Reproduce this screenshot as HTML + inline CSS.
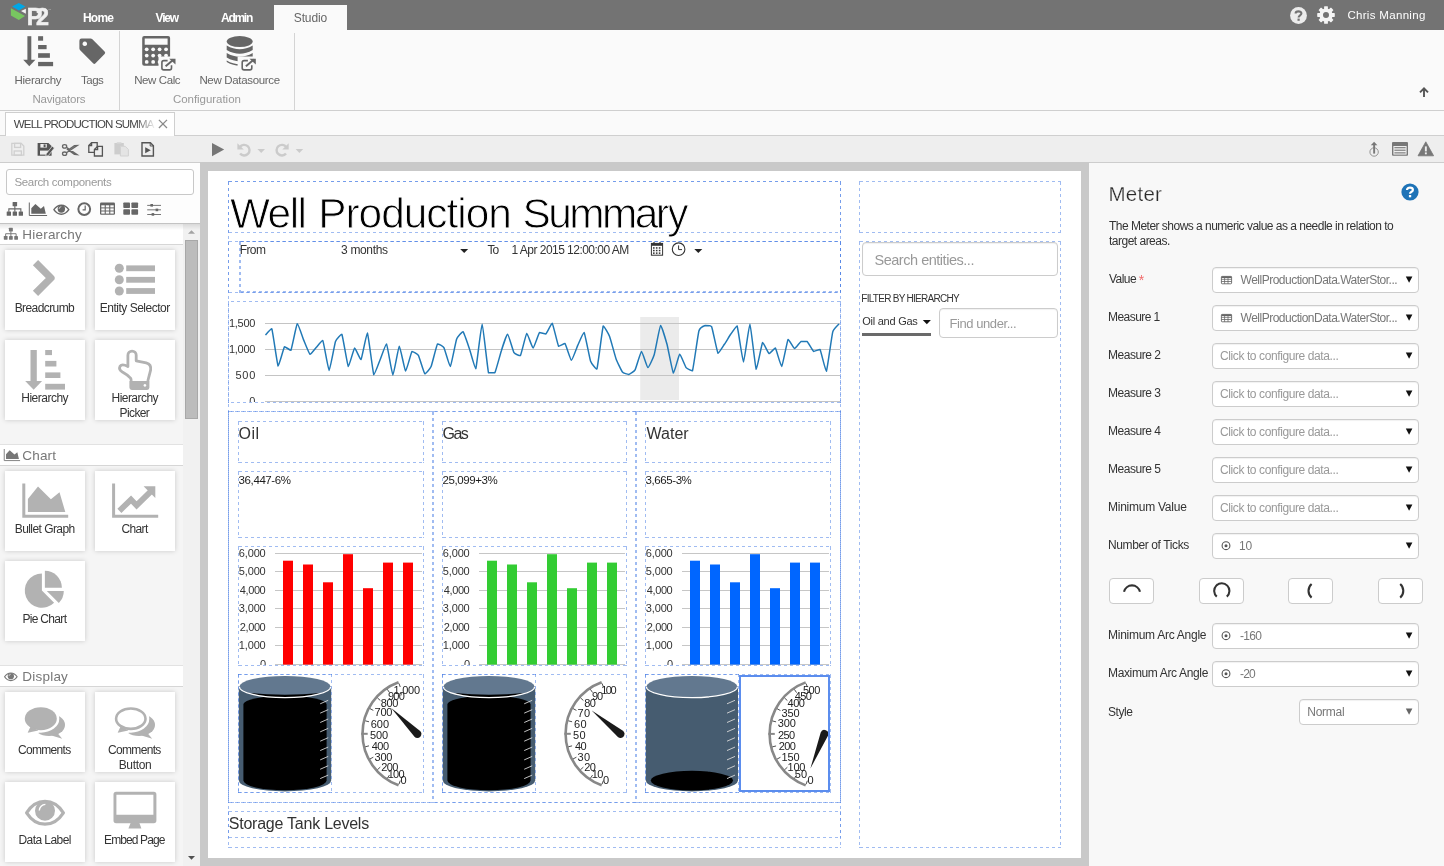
<!DOCTYPE html>
<html><head><meta charset="utf-8"><title>Well Production Summary</title>
<style>
html,body{margin:0;padding:0;}
body{width:1444px;height:866px;overflow:hidden;position:relative;background:#fafafa;font-family:"Liberation Sans",sans-serif;}
.t{position:absolute;white-space:nowrap;line-height:1;}
.b{position:absolute;box-sizing:border-box;}
.d{position:absolute;box-sizing:border-box;background:
repeating-linear-gradient(to right,rgba(82,132,230,0.55) 0,rgba(82,132,230,0.55) 3px,transparent 3px,transparent 6px) 1px 0/calc(100% - 2px) 1px no-repeat,
repeating-linear-gradient(to right,rgba(82,132,230,0.55) 0,rgba(82,132,230,0.55) 3px,transparent 3px,transparent 6px) 1px 100%/calc(100% - 2px) 1px no-repeat,
repeating-linear-gradient(to bottom,rgba(82,132,230,0.55) 0,rgba(82,132,230,0.55) 3px,transparent 3px,transparent 6px) 0 1px/1px calc(100% - 2px) no-repeat,
repeating-linear-gradient(to bottom,rgba(82,132,230,0.55) 0,rgba(82,132,230,0.55) 3px,transparent 3px,transparent 6px) 100% 1px/1px calc(100% - 2px) no-repeat,
linear-gradient(rgba(82,132,230,0.55),rgba(82,132,230,0.55)) 0 0/1px 1px no-repeat,linear-gradient(rgba(82,132,230,0.55),rgba(82,132,230,0.55)) 100% 0/1px 1px no-repeat,linear-gradient(rgba(82,132,230,0.55),rgba(82,132,230,0.55)) 0 100%/1px 1px no-repeat,linear-gradient(rgba(82,132,230,0.55),rgba(82,132,230,0.55)) 100% 100%/1px 1px no-repeat;}
svg{position:absolute;overflow:visible;}
#root{position:absolute;left:0;top:0;width:1444px;height:866px;will-change:transform;}
.card{position:absolute;width:80px;height:80px;background:#fff;box-shadow:0 0 5px rgba(0,0,0,0.18);}
.dd{position:absolute;box-sizing:border-box;background:#fff;border:1px solid #ccc;border-radius:4px;box-shadow:inset 0 1px 1px rgba(0,0,0,0.06);}
</style></head>
<body>
<div id="root">
<div class="b" style="left:0px;top:0px;width:1444px;height:30px;background:#737373;"></div>
<svg style="left:0;top:0" width="60" height="30" viewBox="0 0 60 30">
<polygon points="12.1,6.6 18.8,2.9 25.4,6.4 18.9,10.4" fill="#00a7e6"/>
<polygon points="10.9,8.2 18.3,12.3 25,15.9 18.8,19.9 10.9,15.4" fill="#78c660"/>
<polygon points="25.9,8.7 25.9,13.8 21,11" fill="#f2f2f2"/>
</svg>
<span class="t" style="left:26.80px;top:6.00px;font-size:23.4px;color:#f0f0f0;letter-spacing:-6.500px;font-weight:bold;-webkit-text-stroke:0.5px #f0f0f0;">P2</span>
<span class="t" style="left:48.20px;top:9.00px;font-size:3px;color:#ccc;">™</span>
<span class="t" style="left:82.90px;top:12.00px;font-size:12px;color:#fff;letter-spacing:-0.733px;font-weight:bold;">Home</span>
<span class="t" style="left:155.60px;top:12.00px;font-size:12px;color:#fff;letter-spacing:-1.233px;font-weight:bold;">View</span>
<span class="t" style="left:221.00px;top:12.00px;font-size:12px;color:#fff;letter-spacing:-1.275px;font-weight:bold;">Admin</span>
<div class="b" style="left:274px;top:5px;width:73.2px;height:26px;background:#fafafa;"></div>
<span class="t" style="left:293.80px;top:12.00px;font-size:12px;color:#666;letter-spacing:-0.140px;">Studio</span>
<svg style="left:1289.8px;top:7px" width="17" height="17" viewBox="0 0 17 17"><circle cx="8.5" cy="8.5" r="8.4" fill="#ececec"/>
<path d="M5.6 6.6 C5.6 3.6 11.4 3.6 11.4 6.6 C11.4 8.4 8.6 8.3 8.6 10.4" fill="none" stroke="#737373" stroke-width="2.1"/><rect x="7.5" y="11.6" width="2.2" height="2.2" fill="#737373"/></svg>
<svg style="left:1317px;top:6.2px" width="18" height="18" viewBox="0 0 18 18"><circle cx="9" cy="9" r="4.8" fill="none" stroke="#f4f4f4" stroke-width="3.6"/><rect x="-1.9" y="-8.8" width="3.8" height="5" rx="0.6" transform="translate(9 9) rotate(0)" fill="#f4f4f4"/><rect x="-1.9" y="-8.8" width="3.8" height="5" rx="0.6" transform="translate(9 9) rotate(45)" fill="#f4f4f4"/><rect x="-1.9" y="-8.8" width="3.8" height="5" rx="0.6" transform="translate(9 9) rotate(90)" fill="#f4f4f4"/><rect x="-1.9" y="-8.8" width="3.8" height="5" rx="0.6" transform="translate(9 9) rotate(135)" fill="#f4f4f4"/><rect x="-1.9" y="-8.8" width="3.8" height="5" rx="0.6" transform="translate(9 9) rotate(180)" fill="#f4f4f4"/><rect x="-1.9" y="-8.8" width="3.8" height="5" rx="0.6" transform="translate(9 9) rotate(225)" fill="#f4f4f4"/><rect x="-1.9" y="-8.8" width="3.8" height="5" rx="0.6" transform="translate(9 9) rotate(270)" fill="#f4f4f4"/><rect x="-1.9" y="-8.8" width="3.8" height="5" rx="0.6" transform="translate(9 9) rotate(315)" fill="#f4f4f4"/></svg>
<span class="t" style="left:1347.40px;top:10.00px;font-size:11.5px;color:#fff;letter-spacing:0.317px;">Chris Manning</span>
<div class="b" style="left:0px;top:30px;width:1444px;height:80.5px;background:#fafafa;border-bottom:1px solid #cfcfcf;"></div>
<svg style="left:0;top:30px" width="300" height="80" viewBox="0 30 300 80">
<g fill="#666">
<rect x="27.4" y="36.2" width="3.9" height="24.5"/><polygon points="23.2,59.8 35.4,59.8 29.3,66.3"/>
<rect x="38.1" y="36.2" width="5" height="4.5"/><rect x="38.1" y="45" width="8.5" height="4.2"/><rect x="38.1" y="53.2" width="11.8" height="4.6"/><rect x="38.1" y="61.9" width="15" height="4.3"/>
<path d="M81.6 38.5 L90.5 38.5 Q91.6 38.5 92.4 39.3 L104.6 51.6 Q105.8 52.8 104.6 54 L95.5 63.3 Q94.3 64.5 93.1 63.3 L80.4 50.5 Q79.4 49.5 79.4 48.4 L79.4 40.7 Q79.4 38.5 81.6 38.5 Z M84.8 41.5 a2.3 2.3 0 1 0 0.01 0 Z" fill-rule="evenodd"/>
</g>
<!-- calculator -->
<g fill="#666">
<path fill-rule="evenodd" d="M144.2 36.1 H168.1 Q170.1 36.1 170.1 38.1 V63.8 Q170.1 65.8 168.1 65.8 H144.2 Q142.2 65.8 142.2 63.8 V38.1 Q142.2 36.1 144.2 36.1 Z M144.7 38.6 V44.8 H167.6 V38.6 Z"/>
</g>
<g fill="#fafafa">
<circle cx="146.7" cy="49.3" r="1.9"/><circle cx="153.15" cy="49.3" r="1.9"/><circle cx="159.6" cy="49.3" r="1.9"/><circle cx="166.05" cy="49.3" r="1.9"/><circle cx="146.7" cy="55.6" r="1.9"/><circle cx="153.15" cy="55.6" r="1.9"/><circle cx="159.6" cy="55.6" r="1.9"/><circle cx="166.05" cy="55.6" r="1.9"/><circle cx="146.7" cy="61.9" r="1.9"/><circle cx="153.15" cy="61.9" r="1.9"/><circle cx="159.6" cy="61.9" r="1.9"/><circle cx="166.05" cy="61.9" r="1.9"/>
</g>
<!-- ext link 1 -->
<rect x="158.5" y="56.5" width="18" height="15.5" fill="#fafafa"/>
<g fill="none" stroke="#666" stroke-width="1.6"><path d="M167.6 60.6 H163.8 Q161.9 60.6 161.9 62.5 V68 Q161.9 69.9 163.8 69.9 H169.6 Q171.5 69.9 171.5 68 V65.2"/><path d="M165.6 66.2 L173.6 59.6" stroke-width="2"/></g>
<polygon points="169.2,58.7 175.5,58.7 175.5,64.6" fill="#666"/>
<!-- database -->
<g fill="#666">
<ellipse cx="239.7" cy="41.6" rx="13" ry="5.5"/>
<path d="M226.7 45.4 Q239.7 53 252.7 45.4 V50 Q239.7 57.6 226.7 50 Z"/>
<path d="M226.7 53 Q239.7 60.6 252.7 53 V57.6 Q239.7 65.2 226.7 57.6 Z"/>
<path d="M226.7 60.4 Q239.7 68 252.7 60.4 V62 Q239.7 69.6 226.7 62 Z"/>
</g>
<rect x="237.6" y="56.5" width="19" height="15.5" fill="#fafafa"/>
<g fill="none" stroke="#666" stroke-width="1.6"><path d="M247.9 60.6 H244.1 Q242.2 60.6 242.2 62.5 V68 Q242.2 69.9 244.1 69.9 H249.9 Q251.8 69.9 251.8 68 V65.2"/><path d="M245.9 66.2 L253.9 59.6" stroke-width="2"/></g>
<polygon points="249.5,58.7 255.8,58.7 255.8,64.6" fill="#666"/>
</svg>
<span class="t" style="left:14.50px;top:75.00px;font-size:11.5px;color:#666;letter-spacing:-0.275px;">Hierarchy</span>
<span class="t" style="left:81.00px;top:75.00px;font-size:11.5px;color:#666;letter-spacing:-0.500px;">Tags</span>
<span class="t" style="left:134.20px;top:75.00px;font-size:11.5px;color:#666;letter-spacing:-0.400px;">New Calc</span>
<span class="t" style="left:199.40px;top:75.00px;font-size:11.5px;color:#666;letter-spacing:-0.331px;">New Datasource</span>
<span class="t" style="left:32.50px;top:94.00px;font-size:11.5px;color:#999;letter-spacing:-0.211px;">Navigators</span>
<span class="t" style="left:172.90px;top:94.00px;font-size:11.5px;color:#999;letter-spacing:-0.033px;">Configuration</span>
<div class="b" style="left:119.3px;top:31px;width:1px;height:79px;background:#d4d4d4;"></div>
<div class="b" style="left:294px;top:33px;width:1px;height:77px;background:#d4d4d4;"></div>
<svg style="left:1418px;top:86px" width="12" height="12" viewBox="0 0 12 12"><path d="M6 11 V2.6 M2 6.4 L6 2.3 L10 6.4" fill="none" stroke="#555" stroke-width="1.9"/></svg>
<div class="b" style="left:0px;top:111px;width:1444px;height:25px;background:#fafafa;border-bottom:1px solid #cfcfcf;"></div>
<div class="b" style="left:5px;top:112px;width:170px;height:24px;background:#fff;border:1px solid #cfcfcf;border-bottom:none;"></div>
<span class="t" style="left:13.80px;top:119.00px;font-size:11.5px;color:#444;letter-spacing:-0.840px;">WELL PRODUCTION SUMMA</span>
<div class="b" style="left:136px;top:116px;width:19px;height:16px;background:linear-gradient(to right,rgba(255,255,255,0),rgba(255,255,255,0.95));"></div>
<svg style="left:157px;top:118px" width="12" height="12" viewBox="157 118 12 12"><path d="M158.9 119.9 L167 128 M167 119.9 L158.9 128" stroke="#8a8a8a" stroke-width="1.3" fill="none"/></svg>
<div class="b" style="left:0px;top:136px;width:1444px;height:26px;background:#eeeeee;"></div>
<div class="b" style="left:0px;top:162px;width:1444px;height:1px;background:#cdcdcd;"></div>
<svg style="left:0;top:136px" width="320" height="26" viewBox="0 136 320 26">
<!-- save disabled -->
<g fill="none" stroke="#cfcfcf" stroke-width="1.3"><path d="M11.8 143.4 H21.2 L23.8 146 V155.2 H11.8 Z"/><rect x="14.6" y="143.4" width="6" height="4"/><rect x="14.2" y="151" width="7.2" height="4.2"/></g>
<!-- save edit -->
<g><path d="M37.6 142.9 H48.4 L51.6 146.1 V155.8 H37.6 Z" fill="#555"/><rect x="40.4" y="144" width="6.4" height="3.6" fill="#eee"/><rect x="43.6" y="144.4" width="2" height="2.8" fill="#555"/><rect x="40" y="150.6" width="8.6" height="4" fill="#eee"/>
<path d="M46.2 153.8 L52.2 146.2 L54.4 148 L48.4 155.6 L45.8 156.2 Z" fill="#555" stroke="#eee" stroke-width="0.7"/></g>
<!-- scissors -->
<g fill="none" stroke="#666" stroke-width="1.3"><ellipse cx="64.6" cy="146.4" rx="2.1" ry="1.7"/><ellipse cx="64.6" cy="153.7" rx="2.1" ry="1.7"/><path d="M66.4 147.3 L77.2 154.6 L74.4 154.4 L66.8 149 M66.4 152.8 L77.2 145.5 L74.4 145.7 L69.6 149"/></g>
<!-- copy -->
<g fill="#eee" stroke="#555" stroke-width="1.3"><path d="M91.6 142.7 H97.2 V152.4 H88.8 V145.5 Z"/><path d="M91.6 142.7 V145.5 H88.8" fill="none"/><path d="M97.6 146.3 H102.4 V156 H94.4 V149.5 Z"/><path d="M97.6 146.3 V149.5 H94.4" fill="none"/></g>
<!-- paste disabled -->
<g><rect x="114.4" y="143" width="9.4" height="11.4" fill="#cdcdcd"/><rect x="116.8" y="142.2" width="4.6" height="1.6" fill="#d6d6d6"/><path d="M120.4 146.3 H125.2 L128.4 149.5 V156 H120.4 Z" fill="#e4e4e4" stroke="#d2d2d2" stroke-width="1"/></g>
<!-- preview -->
<g><path d="M142 142.7 H150.4 L153.4 145.7 V156 H142 Z" fill="#eee" stroke="#555" stroke-width="1.4"/><path d="M150.2 142.7 V146 H153.4" fill="none" stroke="#555" stroke-width="1"/><polygon points="145.2,147.2 145.2,153.2 150.8,150.2" fill="#555"/></g>
<!-- play -->
<polygon points="212,143 212,156.2 224.2,149.6" fill="#767676"/>
<!-- undo -->
<g fill="none" stroke="#cbcbcb" stroke-width="2.4"><path d="M239.9 147.1 A5.3 5.3 0 1 1 240.1 153.5"/></g><polygon points="237.4,143.2 237.4,149.6 243.8,149.6" fill="#cbcbcb"/>
<polygon points="257.4,149 265,149 261.2,153" fill="#cbcbcb"/>
<!-- redo -->
<g fill="none" stroke="#cbcbcb" stroke-width="2.4"><path d="M286.2 147.1 A5.3 5.3 0 1 0 286 153.5"/></g><polygon points="288.7,143.2 288.7,149.6 282.3,149.6" fill="#cbcbcb"/>
<polygon points="295.6,149 303.2,149 299.4,153" fill="#cbcbcb"/>
</svg>
<svg style="left:1360px;top:136px" width="84" height="26" viewBox="1360 136 84 26">
<g fill="none" stroke="#8a8a8a" stroke-width="0.9"><circle cx="1374.1" cy="152" r="4.2"/></g>
<rect x="1373.2" y="144.6" width="1.9" height="9" fill="#777"/><polygon points="1370.8,145.2 1377.4,145.2 1374.1,141.8" fill="#777"/>
<rect x="1392" y="142" width="16" height="13.8" rx="1" fill="#777"/><rect x="1393.4" y="146" width="13.2" height="8.6" fill="#eee"/>
<g fill="#888"><rect x="1394.4" y="147" width="11.2" height="1.3"/><rect x="1394.4" y="149.6" width="11.2" height="1.3"/><rect x="1394.4" y="152.2" width="11.2" height="1.3"/></g>
<polygon points="1425.8,141.8 1433.6,155.8 1418,155.8" fill="#777" stroke="#777" stroke-width="0.8" stroke-linejoin="round"/>
<rect x="1424.9" y="146.4" width="1.9" height="5" fill="#eee"/><rect x="1424.9" y="152.4" width="1.9" height="1.9" fill="#eee"/>
</svg>
<div class="b" style="left:0px;top:163px;width:200px;height:703px;background:#f5f5f5;"></div>
<div class="b" style="left:0px;top:163px;width:200px;height:60px;background:#fdfdfd;"></div>
<div class="b" style="left:6px;top:169px;width:188px;height:26px;background:#fff;border:1px solid #c8c8c8;border-radius:3px;"></div>
<span class="t" style="left:14.40px;top:177.00px;font-size:11.5px;color:#9a9a9a;letter-spacing:-0.312px;">Search components</span>
<svg style="left:0;top:196px" width="180" height="26" viewBox="0 196 180 26">
<g transform="translate(6.7 202.1) scale(1)" fill="#666"><rect x="5.9" y="0" width="4.5" height="4.2" rx="0.5"/><rect x="0" y="9.4" width="4.3" height="4.3" rx="0.5"/><rect x="6" y="9.4" width="4.3" height="4.3" rx="0.5"/><rect x="12" y="9.4" width="4.3" height="4.3" rx="0.5"/><path d="M8.15 4 V9.6 M2.15 9.6 V6.8 H14.15 V9.6" fill="none" stroke="#666" stroke-width="1.1"/></g>
<g transform="translate(28.8 202.5) scale(1)" fill="#666"><path d="M0.5 0 V13 H18.3" fill="none" stroke="#666" stroke-width="1"/><polygon points="2.5,11.2 2.5,5.8 6.6,1.4 12,6.2 15.2,3.6 17,11.2"/></g>
<g transform="translate(53.2 204.5) scale(1)"><path d="M0.7 5.2 C2.6 2.3 5.2 0.7 8.15 0.7 C11.1 0.7 13.7 2.3 15.6 5.2 C13.7 8.1 11.1 9.7 8.15 9.7 C5.2 9.7 2.6 8.1 0.7 5.2 Z" fill="none" stroke="#666" stroke-width="1.4" stroke-linejoin="round"/><circle cx="8.15" cy="4.5" r="3.7" fill="#666"/><path d="M5.9 4.4 A2.3 2.3 0 0 1 8.1 2.2" stroke="#fdfdfd" stroke-width="0.7" fill="none"/></g>
<circle cx="84.25" cy="209.1" r="5.9" fill="none" stroke="#666" stroke-width="2"/><path d="M85.2 205.6 V209.9 H82.6" fill="none" stroke="#666" stroke-width="1.2"/>
<rect x="100" y="202.5" width="15" height="12.3" rx="1.2" fill="#666"/><g fill="#fdfdfd"><rect x="101.3" y="205.3" width="3.4" height="2.1"/><rect x="105.8" y="205.3" width="3.4" height="2.1"/><rect x="110.3" y="205.3" width="3.4" height="2.1"/><rect x="101.3" y="208.4" width="3.4" height="2.1"/><rect x="105.8" y="208.4" width="3.4" height="2.1"/><rect x="110.3" y="208.4" width="3.4" height="2.1"/><rect x="101.3" y="211.5" width="3.4" height="2.1"/><rect x="105.8" y="211.5" width="3.4" height="2.1"/><rect x="110.3" y="211.5" width="3.4" height="2.1"/></g>
<g fill="#666"><rect x="123.3" y="202.5" width="6.7" height="5.6" rx="0.8"/><rect x="131.4" y="202.5" width="6.7" height="5.6" rx="0.8"/><rect x="123.3" y="209.2" width="6.7" height="5.6" rx="0.8"/><rect x="131.4" y="209.2" width="6.7" height="5.6" rx="0.8"/></g>
<g fill="#666"><rect x="147.2" y="204.9" width="13.8" height="0.9"/><rect x="147.2" y="209.4" width="13.8" height="0.9"/><rect x="147.2" y="214" width="13.8" height="0.9"/><rect x="150.4" y="204" width="2.6" height="2.6"/><rect x="155.6" y="208.6" width="2.6" height="2.6"/><rect x="151.6" y="213.1" width="2.6" height="2.6"/></g>
</svg>
<div class="b" style="left:183px;top:224px;width:17px;height:642px;background:#f1f1f1;"></div>
<div class="b" style="left:185.4px;top:240.3px;width:12.4px;height:179.2px;background:#bcbcbc;border:1px solid #a8a8a8;"></div>
<svg style="left:183px;top:224px" width="17" height="642" viewBox="0 0 17 642"><polygon points="5,9.8 12,9.8 8.5,6.2" fill="#a3a3a3"/><polygon points="5,632 12,632 8.5,635.8" fill="#505050"/></svg>
<div class="b" style="left:0px;top:223px;width:183px;height:22px;background:#fff;border-bottom:1px solid #d6d6d6;border-top:1px solid #e2e2e2;"></div>
<span class="t" style="left:22.30px;top:228.00px;font-size:13.5px;color:#777;letter-spacing:0.213px;">Hierarchy</span>
<div class="b" style="left:0px;top:444px;width:183px;height:22px;background:#fff;border-bottom:1px solid #d6d6d6;border-top:1px solid #e2e2e2;"></div>
<span class="t" style="left:22.30px;top:449.00px;font-size:13.5px;color:#777;letter-spacing:0.175px;">Chart</span>
<div class="b" style="left:0px;top:665px;width:183px;height:22px;background:#fff;border-bottom:1px solid #d6d6d6;border-top:1px solid #e2e2e2;"></div>
<span class="t" style="left:22.30px;top:670.00px;font-size:13.5px;color:#777;letter-spacing:0.217px;">Display</span>
<div class="b" style="left:0px;top:223px;width:200px;height:1px;background:#c3c3c3;"></div>
<div class="b" style="left:0px;top:224px;width:200px;height:6px;background:linear-gradient(to bottom,rgba(0,0,0,0.10),rgba(0,0,0,0));"></div>
<svg style="left:0;top:224px" width="30" height="470" viewBox="0 224 30 470">
<g transform="translate(3.8 227.8) scale(0.87)" fill="#777"><rect x="5.9" y="0" width="4.5" height="4.2" rx="0.5"/><rect x="0" y="9.4" width="4.3" height="4.3" rx="0.5"/><rect x="6" y="9.4" width="4.3" height="4.3" rx="0.5"/><rect x="12" y="9.4" width="4.3" height="4.3" rx="0.5"/><path d="M8.15 4 V9.6 M2.15 9.6 V6.8 H14.15 V9.6" fill="none" stroke="#777" stroke-width="1.1"/></g>
<g transform="translate(3.8 449) scale(0.89)" fill="#777"><path d="M0.5 0 V13 H18.3" fill="none" stroke="#777" stroke-width="1"/><polygon points="2.5,11.2 2.5,5.8 6.6,1.4 12,6.2 15.2,3.6 17,11.2"/></g>
<g transform="translate(4 672.4) scale(0.84)"><path d="M0.7 5.2 C2.6 2.3 5.2 0.7 8.15 0.7 C11.1 0.7 13.7 2.3 15.6 5.2 C13.7 8.1 11.1 9.7 8.15 9.7 C5.2 9.7 2.6 8.1 0.7 5.2 Z" fill="none" stroke="#777" stroke-width="1.4" stroke-linejoin="round"/><circle cx="8.15" cy="4.5" r="3.7" fill="#777"/><path d="M5.9 4.4 A2.3 2.3 0 0 1 8.1 2.2" stroke="#fdfdfd" stroke-width="0.7" fill="none"/></g>
</svg>
<div class="card" style="left:5px;top:250px"></div>
<div class="card" style="left:95px;top:250px"></div>
<div class="card" style="left:5px;top:340px"></div>
<div class="card" style="left:95px;top:340px"></div>
<div class="card" style="left:5px;top:471px"></div>
<div class="card" style="left:95px;top:471px"></div>
<div class="card" style="left:5px;top:561px"></div>
<div class="card" style="left:5px;top:692px"></div>
<div class="card" style="left:95px;top:692px"></div>
<div class="card" style="left:5px;top:782px"></div>
<div class="card" style="left:95px;top:782px"></div>
<span class="t" style="left:14.70px;top:302.00px;font-size:12px;color:#333;letter-spacing:-0.589px;">Breadcrumb</span>
<span class="t" style="left:99.80px;top:302.00px;font-size:12px;color:#333;letter-spacing:-0.500px;">Entity Selector</span>
<span class="t" style="left:21.30px;top:392.00px;font-size:12px;color:#333;letter-spacing:-0.512px;">Hierarchy</span>
<span class="t" style="left:111.50px;top:392.00px;font-size:12px;color:#333;letter-spacing:-0.538px;">Hierarchy</span>
<span class="t" style="left:119.60px;top:407.00px;font-size:12px;color:#333;letter-spacing:-0.620px;">Picker</span>
<span class="t" style="left:14.70px;top:523.00px;font-size:12px;color:#333;letter-spacing:-0.555px;">Bullet Graph</span>
<span class="t" style="left:121.40px;top:523.00px;font-size:12px;color:#333;letter-spacing:-0.600px;">Chart</span>
<span class="t" style="left:22.40px;top:613.00px;font-size:12px;color:#333;letter-spacing:-0.675px;">Pie Chart</span>
<span class="t" style="left:17.90px;top:744.00px;font-size:12px;color:#333;letter-spacing:-0.671px;">Comments</span>
<span class="t" style="left:108.10px;top:744.00px;font-size:12px;color:#333;letter-spacing:-0.686px;">Comments</span>
<span class="t" style="left:118.70px;top:759.00px;font-size:12px;color:#333;letter-spacing:-0.340px;">Button</span>
<span class="t" style="left:18.40px;top:834.00px;font-size:12px;color:#333;letter-spacing:-0.544px;">Data Label</span>
<span class="t" style="left:104.00px;top:834.00px;font-size:12px;color:#333;letter-spacing:-0.878px;">Embed Page</span>
<svg style="left:0;top:245px" width="183" height="621" viewBox="0 245 183 621">
<g fill="#b2b2b2" stroke="none">
<path d="M35.5 262.7 L50.9 278 L35.5 293.3" fill="none" stroke="#b2b2b2" stroke-width="7.4" stroke-linejoin="round"/>
<circle cx="119.3" cy="268.3" r="4.5"/><rect x="126.2" y="265.4" width="28.8" height="5.8"/>
<circle cx="119.3" cy="279.8" r="4.5"/><rect x="126.2" y="276.9" width="28.8" height="5.8"/>
<circle cx="119.3" cy="291" r="4.5"/><rect x="126.2" y="288.1" width="28.8" height="5.8"/>
<rect x="30.5" y="350" width="6.3" height="32"/><polygon points="25.2,381 42.1,381 33.65,389.8"/>
<rect x="45.2" y="350" width="6.8" height="5.1"/>
<rect x="45.2" y="360.9" width="11.2" height="5.6"/>
<rect x="45.2" y="372.4" width="15.2" height="5.6"/>
<rect x="45.2" y="383.8" width="19.8" height="5.8"/>
<path d="M131.3 381 L130.8 378.4 Q127 374.4 122.4 372 Q118.4 369.6 120 366.4 Q122 363.4 127.9 366.6 V355.2 A4.1 4.1 0 0 1 136.2 355.2 V360.8 L146.2 362.8 Q151.6 364.2 150.6 370.2 L147.8 381" fill="none" stroke="#b2b2b2" stroke-width="2.8" stroke-linejoin="round"/>
<path d="M129.4 381 H149.4 V387.6 Q149.4 389.9 147.1 389.9 H131.7 Q129.4 389.9 129.4 387.6 Z M144.9 384 a1.4 1.4 0 1 0 0.01 0 Z" fill-rule="evenodd"/>
<path d="M23.8 483.4 V516.3 H68.2" fill="none" stroke="#b2b2b2" stroke-width="3"/>
<polygon points="27.9,512 27.9,499 38,486.6 50.9,499.2 59.5,492.2 65.3,512"/>
<path d="M113.6 483.4 V516.3 H158.2" fill="none" stroke="#b2b2b2" stroke-width="3"/>
<path d="M119.4 510.8 L131 499.6 L136.6 505.4 L150.6 491.6" fill="none" stroke="#b2b2b2" stroke-width="5.8"/>
<polygon points="143.6,486.2 155.3,486.2 155.3,498"/>
<path d="M41.9 573.4 A17.2 17.2 0 1 0 54.1 602.8 L41.9 590.6 Z"/>
<path d="M44.9 570.8 A17 17 0 0 1 61.9 587.8 H44.9 Z"/>
<path d="M46.8 591 H63.8 A17 17 0 0 1 58.8 603 Z"/>
<ellipse cx="49" cy="724.9" rx="16" ry="11.2"/><polygon points="57.6,733.2 62.2,738.7 51.5,735.6"/><ellipse cx="40.8" cy="718.7" rx="18.5" ry="14" fill="#fff"/><polygon points="27.5,726 25.4,735.2 40,733" fill="#fff"/><ellipse cx="40.8" cy="718.7" rx="16" ry="11.5"/><polygon points="30.6,726.6 27.6,732.8 38.4,730.6"/>
<ellipse cx="139" cy="724.9" rx="16" ry="11.2"/><polygon points="147.6,733.2 152.2,738.7 141.5,735.6"/><ellipse cx="130.8" cy="718.7" rx="18.5" ry="14" fill="#fff"/><polygon points="117.5,726 115.4,735.2 130,733" fill="#fff"/><polygon points="120.6,726.6 117.6,732.8 128.4,730.6"/><ellipse cx="130.8" cy="718.7" rx="14.7" ry="10.2" fill="#fff" stroke="#b2b2b2" stroke-width="2.6"/>
<path d="M26.6 812.8 C31 806 38 801.4 45 801.4 C52 801.4 59 806 63.4 812.8 C59 819.6 52 824.2 45 824.2 C38 824.2 31 819.6 26.6 812.8 Z" fill="none" stroke="#b2b2b2" stroke-width="3.2" stroke-linejoin="round"/><circle cx="45" cy="810.7" r="10"/><path d="M39.3 810.4 A6.2 6.2 0 0 1 45.4 804.4" stroke="#fff" stroke-width="1.4" fill="none"/>
<path fill-rule="evenodd" d="M116.1 791.8 H153.8 Q156.4 791.8 156.4 794.4 V820.6 Q156.4 823.2 153.8 823.2 H116.1 Q113.5 823.2 113.5 820.6 V794.4 Q113.5 791.8 116.1 791.8 Z M116.4 794.8 V814.8 H153.4 V794.8 Z"/><polygon points="130.6,823 139.4,823 141.4,828.6 128.4,828.6"/>
</g></svg>
<div class="b" style="left:200px;top:162px;width:890px;height:704px;background:#c9c9c9;"></div>
<div class="b" style="left:208px;top:171px;width:873px;height:687px;background:#fff;"></div>
<div class="d" style="left:228px;top:181px;width:613px;height:52px;"></div>
<span class="t" style="left:229.90px;top:193.00px;font-size:42.4px;color:#000;letter-spacing:-1.533px;-webkit-text-stroke:0.9px #fff;">Well</span>
<span class="t" style="left:318.20px;top:193.00px;font-size:42.4px;color:#000;letter-spacing:-0.989px;-webkit-text-stroke:0.9px #fff;">Production</span>
<span class="t" style="left:522.60px;top:193.00px;font-size:42.4px;color:#000;letter-spacing:-2.583px;-webkit-text-stroke:0.9px #fff;">Summary</span>
<div class="d" style="left:228px;top:241px;width:613px;height:52px;"></div>
<div class="d" style="left:239px;top:241px;width:602px;height:52px;"></div>
<div class="d" style="left:240px;top:241px;width:601px;height:51px;"></div>
<span class="t" style="left:239.70px;top:244.00px;font-size:12px;color:#333;letter-spacing:-0.600px;">From</span>
<span class="t" style="left:341.10px;top:244.00px;font-size:12px;color:#333;letter-spacing:-0.357px;">3 months</span>
<span class="t" style="left:487.50px;top:244.00px;font-size:12px;color:#333;letter-spacing:-0.900px;">To</span>
<span class="t" style="left:511.60px;top:244.00px;font-size:12px;color:#333;letter-spacing:-0.533px;">1 Apr 2015 12:00:00 AM</span>
<svg style="left:440px;top:240px" width="280" height="20" viewBox="440 240 280 20">
<polygon points="460.2,249 468.2,249 464.2,253" fill="#222"/>
<rect x="651.4" y="243.4" width="11.2" height="11.8" fill="none" stroke="#333" stroke-width="1"/><rect x="651.4" y="243.4" width="11.2" height="2.4" fill="#333"/>
<g fill="#333"><rect x="653" y="247.2" width="1.6" height="1.5"/><rect x="655.9" y="247.2" width="1.6" height="1.5"/><rect x="658.8" y="247.2" width="1.6" height="1.5"/><rect x="653" y="249.8" width="1.6" height="1.5"/><rect x="655.9" y="249.8" width="1.6" height="1.5"/><rect x="658.8" y="249.8" width="1.6" height="1.5"/><rect x="653" y="252.4" width="1.6" height="1.5"/><rect x="655.9" y="252.4" width="1.6" height="1.5"/><rect x="658.8" y="252.4" width="1.6" height="1.5"/></g>
<rect x="653.4" y="242" width="1.2" height="2.4" fill="#333"/><rect x="659.4" y="242" width="1.2" height="2.4" fill="#333"/>
<circle cx="678.6" cy="249.2" r="6.3" fill="none" stroke="#333" stroke-width="1.1"/><path d="M678.6 245.4 V249.6 H682" fill="none" stroke="#333" stroke-width="1"/>
<polygon points="694.3,249 702.3,249 698.3,253" fill="#222"/>
</svg>
<div class="d" style="left:228px;top:301px;width:613px;height:102px;background-position:3px 0,3px 100%,0 3px,100% 3px,0 0,100% 0,0 100%,100% 100%;"></div>
<div class="b" style="left:229px;top:302px;width:611px;height:100px;overflow:hidden;">
<svg style="left:0;top:0" width="611" height="110" viewBox="229 302 611 110">
<rect x="640.2" y="317" width="38.8" height="83" fill="#ebebeb"/>
<rect x="265" y="323" width="575" height="1" fill="#c4c4c4"/>
<rect x="265" y="349" width="575" height="1" fill="#c4c4c4"/>
<rect x="265" y="375" width="575" height="1" fill="#c4c4c4"/>
<rect x="265" y="401" width="575" height="1" fill="#c4c4c4"/>
<path d="M265.4 335.0 C265.8 334.6 270.9 328.8 271.8 328.8 C272.7 331.0 277.3 364.7 278.1 366.0 C279.0 366.0 283.6 347.8 284.5 346.7 C285.4 346.7 290.0 350.3 290.9 350.3 C291.8 348.7 296.4 324.4 297.3 323.7 C298.2 323.7 302.8 337.8 303.6 339.9 C304.5 342.0 309.1 353.8 310.0 354.3 C310.9 354.3 315.5 348.2 316.4 347.2 C317.3 346.2 321.9 340.5 322.8 340.5 C323.7 342.1 328.3 370.3 329.1 370.4 C330.0 370.4 334.6 343.9 335.5 341.4 C336.4 338.9 341.0 334.3 341.9 334.3 C342.8 336.1 347.4 365.5 348.3 366.5 C349.2 366.5 353.7 348.6 354.6 348.1 C355.5 348.1 360.1 359.6 361.0 359.6 C361.9 358.5 366.5 333.0 367.4 333.0 C368.3 334.1 372.9 372.8 373.8 374.7 C374.7 374.7 379.2 362.0 380.1 359.8 C381.0 357.6 385.6 343.9 386.5 343.9 C387.4 345.0 392.0 374.7 392.9 374.9 C393.8 374.9 398.4 346.6 399.3 346.3 C400.2 346.3 404.7 370.7 405.6 371.1 C406.5 371.1 411.1 352.5 412.0 351.4 C412.9 351.4 417.5 353.8 418.4 355.4 C419.3 357.0 423.9 373.0 424.8 373.8 C425.7 373.8 430.2 368.6 431.1 366.5 C432.0 364.4 436.6 345.2 437.5 343.9 C438.4 343.9 443.0 346.0 443.9 347.6 C444.8 349.2 449.4 366.5 450.3 366.5 C451.2 365.9 455.7 341.6 456.6 339.2 C457.5 336.8 462.1 331.7 463.0 331.7 C463.9 332.4 468.5 346.1 469.4 348.7 C470.3 351.3 474.9 368.7 475.8 368.7 C476.6 367.0 481.2 324.3 482.1 324.3 C483.0 324.6 487.6 369.3 488.5 372.7 C489.4 372.7 494.0 372.7 494.9 372.7 C495.8 371.2 500.4 353.7 501.3 351.0 C502.1 348.3 506.7 334.3 507.6 334.3 C508.5 334.4 513.1 351.2 514.0 352.7 C514.9 354.2 519.5 355.6 520.4 355.6 C521.3 354.2 525.9 333.9 526.8 333.4 C527.6 333.4 532.2 348.0 533.1 348.0 C534.0 347.9 538.6 333.5 539.5 332.5 C540.4 332.5 545.0 333.9 545.9 333.9 C546.8 333.2 551.4 323.2 552.2 323.2 C553.1 324.1 557.7 344.9 558.6 346.3 C559.5 346.3 564.1 343.6 565.0 343.6 C565.9 344.6 570.5 360.1 571.4 360.2 C572.3 360.2 576.9 347.3 577.7 345.4 C578.6 343.5 583.2 332.5 584.1 332.5 C585.0 333.6 589.6 358.3 590.5 360.9 C591.4 363.5 596.0 369.1 596.9 369.1 C597.8 366.7 602.4 328.4 603.2 326.1 C604.1 326.1 608.7 334.2 609.6 336.5 C610.5 338.8 615.1 356.2 616.0 358.7 C616.9 361.2 621.5 370.9 622.4 372.0 C623.3 373.1 627.9 374.4 628.7 374.4 C629.6 374.2 634.2 371.4 635.1 369.8 C636.0 368.2 640.6 351.6 641.5 351.4 C642.4 351.4 647.0 367.4 647.9 367.6 C648.8 367.6 653.3 357.6 654.2 354.7 C655.1 351.8 659.7 326.2 660.6 325.5 C661.5 325.5 666.1 341.0 667.0 344.3 C667.9 347.6 672.5 372.4 673.4 373.1 C674.3 373.1 678.8 354.7 679.7 354.3 C680.6 354.3 685.2 366.5 686.1 367.6 C687.0 368.7 691.6 370.7 692.5 370.7 C693.4 368.1 698.0 334.2 698.9 331.0 C699.8 327.8 704.3 325.8 705.2 325.5 C706.1 325.5 710.7 325.5 711.6 326.6 C712.5 328.5 717.1 352.0 718.0 353.2 C718.9 353.2 723.5 345.6 724.4 344.3 C725.3 343.0 729.8 335.6 730.7 334.3 C731.6 333.0 736.2 325.9 737.1 325.9 C738.0 327.8 742.6 362.0 743.5 362.0 C744.4 361.9 749.0 324.3 749.9 324.3 C750.8 324.8 755.3 368.0 756.2 369.3 C757.1 369.3 761.7 343.6 762.6 342.5 C763.5 342.5 768.1 353.2 769.0 353.6 C769.9 353.6 774.5 348.1 775.4 348.1 C776.2 349.0 780.8 366.5 781.7 366.5 C782.6 365.9 787.2 340.7 788.1 339.4 C789.0 339.4 793.6 348.3 794.5 348.5 C795.4 348.5 800.0 342.1 800.9 341.6 C801.7 341.6 806.3 341.6 807.2 341.6 C808.1 342.3 812.7 350.9 813.6 351.4 C814.5 351.4 819.1 349.4 820.0 349.4 C820.9 350.8 825.5 371.3 826.4 371.3 C827.2 370.1 831.8 335.4 832.7 332.1 C833.6 328.8 838.7 324.5 839.1 323.9" fill="none" stroke="#2179b6" stroke-width="1.5" stroke-linejoin="round"/>
</svg>
<span class="t" style="left:0.00px;top:16.00px;font-size:11px;color:#333;letter-spacing:-0.275px;">1,500</span>
<span class="t" style="left:0.00px;top:42.00px;font-size:11px;color:#333;letter-spacing:-0.275px;">1,000</span>
<span class="t" style="left:6.60px;top:68.00px;font-size:11px;color:#333;letter-spacing:0.650px;">500</span>
<span class="t" style="left:20.20px;top:94.00px;font-size:11px;color:#333;">0</span>
</div>
<div class="d" style="left:228px;top:411px;width:613px;height:392px;background-position:3px 0,3px 100%,0 3px,100% 3px,0 0,100% 0,0 100%,100% 100%;"></div>
<div class="d" style="left:228px;top:411px;width:205px;height:392px;"></div>
<div class="d" style="left:238px;top:421px;width:186px;height:42px;"></div>
<span class="t" style="left:238.60px;top:426.00px;font-size:16px;color:#333;letter-spacing:0.500px;">Oil</span>
<div class="d" style="left:238px;top:471px;width:186px;height:67px;"></div>
<span class="t" style="left:238.60px;top:475.00px;font-size:11.5px;color:#1c1c1c;letter-spacing:-0.400px;">36,447-6%</span>
<div class="d" style="left:238px;top:546px;width:186px;height:120px;"></div>
<div class="b" style="left:239px;top:547px;width:184px;height:118px;overflow:hidden;">
<svg style="left:0;top:0" width="184" height="125" viewBox="239 547 184 125">
<rect x="275" y="664" width="147" height="1" fill="#c6c6c6"/>
<rect x="275" y="645" width="147" height="1" fill="#c6c6c6"/>
<rect x="275" y="627" width="147" height="1" fill="#c6c6c6"/>
<rect x="275" y="608" width="147" height="1" fill="#c6c6c6"/>
<rect x="275" y="590" width="147" height="1" fill="#c6c6c6"/>
<rect x="275" y="571" width="147" height="1" fill="#c6c6c6"/>
<rect x="275" y="553" width="147" height="1" fill="#c6c6c6"/>
<rect x="283" y="560.7" width="10" height="103.9" fill="#ff0000"/>
<rect x="303" y="564.5" width="10" height="100.1" fill="#ff0000"/>
<rect x="323" y="582.3" width="10" height="82.3" fill="#ff0000"/>
<rect x="343" y="554.2" width="10" height="110.4" fill="#ff0000"/>
<rect x="363" y="588.2" width="10" height="76.4" fill="#ff0000"/>
<rect x="383" y="562.6" width="10" height="102.0" fill="#ff0000"/>
<rect x="403" y="562.6" width="10" height="102.0" fill="#ff0000"/>
</svg>
<span class="t" style="left:20.90px;top:112.00px;font-size:11px;color:#333;">0</span>
<span class="t" style="left:-0.20px;top:93.00px;font-size:11px;color:#333;letter-spacing:-0.150px;">1,000</span>
<span class="t" style="left:0.80px;top:75.00px;font-size:11px;color:#333;letter-spacing:-0.400px;">2,000</span>
<span class="t" style="left:-0.20px;top:56.00px;font-size:11px;color:#333;letter-spacing:-0.150px;">3,000</span>
<span class="t" style="left:0.80px;top:38.00px;font-size:11px;color:#333;letter-spacing:-0.400px;">4,000</span>
<span class="t" style="left:-0.20px;top:19.00px;font-size:11px;color:#333;letter-spacing:-0.150px;">5,000</span>
<span class="t" style="left:-0.20px;top:1.00px;font-size:11px;color:#333;letter-spacing:-0.150px;">6,000</span>
</div>
<div class="d" style="left:238px;top:674px;width:186px;height:119px;"></div>
<div class="d" style="left:433px;top:411px;width:203px;height:392px;"></div>
<div class="d" style="left:442px;top:421px;width:185px;height:42px;"></div>
<span class="t" style="left:442.60px;top:426.00px;font-size:16px;color:#333;letter-spacing:-1.600px;">Gas</span>
<div class="d" style="left:442px;top:471px;width:185px;height:67px;"></div>
<span class="t" style="left:442.60px;top:475.00px;font-size:11.5px;color:#1c1c1c;letter-spacing:-0.425px;">25,099+3%</span>
<div class="d" style="left:442px;top:546px;width:185px;height:120px;"></div>
<div class="b" style="left:443px;top:547px;width:183px;height:118px;overflow:hidden;">
<svg style="left:0;top:0" width="183" height="125" viewBox="443 547 183 125">
<rect x="479" y="664" width="146" height="1" fill="#c6c6c6"/>
<rect x="479" y="645" width="146" height="1" fill="#c6c6c6"/>
<rect x="479" y="627" width="146" height="1" fill="#c6c6c6"/>
<rect x="479" y="608" width="146" height="1" fill="#c6c6c6"/>
<rect x="479" y="590" width="146" height="1" fill="#c6c6c6"/>
<rect x="479" y="571" width="146" height="1" fill="#c6c6c6"/>
<rect x="479" y="553" width="146" height="1" fill="#c6c6c6"/>
<rect x="487" y="560.7" width="10" height="103.9" fill="#33cc33"/>
<rect x="507" y="564.5" width="10" height="100.1" fill="#33cc33"/>
<rect x="527" y="582.3" width="10" height="82.3" fill="#33cc33"/>
<rect x="547" y="554.2" width="10" height="110.4" fill="#33cc33"/>
<rect x="567" y="588.2" width="10" height="76.4" fill="#33cc33"/>
<rect x="587" y="562.6" width="10" height="102.0" fill="#33cc33"/>
<rect x="607" y="562.6" width="10" height="102.0" fill="#33cc33"/>
</svg>
<span class="t" style="left:20.90px;top:112.00px;font-size:11px;color:#333;">0</span>
<span class="t" style="left:-0.20px;top:93.00px;font-size:11px;color:#333;letter-spacing:-0.150px;">1,000</span>
<span class="t" style="left:0.80px;top:75.00px;font-size:11px;color:#333;letter-spacing:-0.400px;">2,000</span>
<span class="t" style="left:-0.20px;top:56.00px;font-size:11px;color:#333;letter-spacing:-0.150px;">3,000</span>
<span class="t" style="left:0.80px;top:38.00px;font-size:11px;color:#333;letter-spacing:-0.400px;">4,000</span>
<span class="t" style="left:-0.20px;top:19.00px;font-size:11px;color:#333;letter-spacing:-0.150px;">5,000</span>
<span class="t" style="left:-0.20px;top:1.00px;font-size:11px;color:#333;letter-spacing:-0.150px;">6,000</span>
</div>
<div class="d" style="left:442px;top:674px;width:185px;height:119px;"></div>
<div class="d" style="left:636px;top:411px;width:205px;height:392px;"></div>
<div class="d" style="left:645px;top:421px;width:186px;height:42px;"></div>
<span class="t" style="left:646.60px;top:426.00px;font-size:16px;color:#333;letter-spacing:0.000px;">Water</span>
<div class="d" style="left:645px;top:471px;width:186px;height:67px;"></div>
<span class="t" style="left:645.60px;top:475.00px;font-size:11.5px;color:#1c1c1c;letter-spacing:-0.429px;">3,665-3%</span>
<div class="d" style="left:645px;top:546px;width:186px;height:120px;"></div>
<div class="b" style="left:646px;top:547px;width:184px;height:118px;overflow:hidden;">
<svg style="left:0;top:0" width="184" height="125" viewBox="646 547 184 125">
<rect x="682" y="664" width="147" height="1" fill="#c6c6c6"/>
<rect x="682" y="645" width="147" height="1" fill="#c6c6c6"/>
<rect x="682" y="627" width="147" height="1" fill="#c6c6c6"/>
<rect x="682" y="608" width="147" height="1" fill="#c6c6c6"/>
<rect x="682" y="590" width="147" height="1" fill="#c6c6c6"/>
<rect x="682" y="571" width="147" height="1" fill="#c6c6c6"/>
<rect x="682" y="553" width="147" height="1" fill="#c6c6c6"/>
<rect x="690" y="560.7" width="10" height="103.9" fill="#0066ff"/>
<rect x="710" y="564.5" width="10" height="100.1" fill="#0066ff"/>
<rect x="730" y="582.3" width="10" height="82.3" fill="#0066ff"/>
<rect x="750" y="554.2" width="10" height="110.4" fill="#0066ff"/>
<rect x="770" y="588.2" width="10" height="76.4" fill="#0066ff"/>
<rect x="790" y="562.6" width="10" height="102.0" fill="#0066ff"/>
<rect x="810" y="562.6" width="10" height="102.0" fill="#0066ff"/>
</svg>
<span class="t" style="left:20.90px;top:112.00px;font-size:11px;color:#333;">0</span>
<span class="t" style="left:-0.20px;top:93.00px;font-size:11px;color:#333;letter-spacing:-0.150px;">1,000</span>
<span class="t" style="left:0.80px;top:75.00px;font-size:11px;color:#333;letter-spacing:-0.400px;">2,000</span>
<span class="t" style="left:-0.20px;top:56.00px;font-size:11px;color:#333;letter-spacing:-0.150px;">3,000</span>
<span class="t" style="left:0.80px;top:38.00px;font-size:11px;color:#333;letter-spacing:-0.400px;">4,000</span>
<span class="t" style="left:-0.20px;top:19.00px;font-size:11px;color:#333;letter-spacing:-0.150px;">5,000</span>
<span class="t" style="left:-0.20px;top:1.00px;font-size:11px;color:#333;letter-spacing:-0.150px;">6,000</span>
</div>
<div class="d" style="left:645px;top:674px;width:186px;height:119px;"></div>
<svg style="left:228px;top:670px" width="614" height="130" viewBox="228 670 614 130">
<path d="M238.8 686.4 V780.6 A46.2 10.8 0 0 0 331.2 780.6 V686.4 Z" fill="#465c70"/><path d="M243.4 704 Q245.4 697.6 285 695 Q324.6 697.6 326.6 704 V780.6 A41.6 9.6 0 0 1 243.4 780.6 Z" fill="#000"/><ellipse cx="285" cy="686.4" rx="45.5" ry="10.5" fill="#62788f"/><path d="M249 692.9 Q285 696.5 321 692.9 A45.5 10.5 0 0 1 249 692.9 Z" fill="#000"/><path d="M239.3 686.7 A45.7 10.9 0 0 0 330.7 686.7" fill="none" stroke="#fff" stroke-width="1.3"/><path d="M320.2 703.8 L328.2 700.3" stroke="#d8d8d8" stroke-width="0.9"/><path d="M320.2 713.15 L328.2 709.65" stroke="#d8d8d8" stroke-width="0.9"/><path d="M320.2 722.5 L328.2 719" stroke="#d8d8d8" stroke-width="0.9"/><path d="M320.2 731.85 L328.2 728.35" stroke="#d8d8d8" stroke-width="0.9"/><path d="M320.2 741.2 L328.2 737.7" stroke="#d8d8d8" stroke-width="0.9"/><path d="M320.2 750.55 L328.2 747.05" stroke="#d8d8d8" stroke-width="0.9"/><path d="M320.2 759.9 L328.2 756.4" stroke="#d8d8d8" stroke-width="0.9"/><path d="M320.2 769.25 L328.2 765.75" stroke="#d8d8d8" stroke-width="0.9"/><path d="M320.2 778.6 L328.2 775.1" stroke="#d8d8d8" stroke-width="0.9"/>
<path d="M442.8 686.4 V780.6 A46.2 10.8 0 0 0 535.2 780.6 V686.4 Z" fill="#465c70"/><path d="M447.4 704 Q449.4 697.6 489 695 Q528.6 697.6 530.6 704 V780.6 A41.6 9.6 0 0 1 447.4 780.6 Z" fill="#000"/><ellipse cx="489" cy="686.4" rx="45.5" ry="10.5" fill="#62788f"/><path d="M453 692.9 Q489 696.5 525 692.9 A45.5 10.5 0 0 1 453 692.9 Z" fill="#000"/><path d="M443.3 686.7 A45.7 10.9 0 0 0 534.7 686.7" fill="none" stroke="#fff" stroke-width="1.3"/><path d="M524.2 703.8 L532.2 700.3" stroke="#d8d8d8" stroke-width="0.9"/><path d="M524.2 713.15 L532.2 709.65" stroke="#d8d8d8" stroke-width="0.9"/><path d="M524.2 722.5 L532.2 719" stroke="#d8d8d8" stroke-width="0.9"/><path d="M524.2 731.85 L532.2 728.35" stroke="#d8d8d8" stroke-width="0.9"/><path d="M524.2 741.2 L532.2 737.7" stroke="#d8d8d8" stroke-width="0.9"/><path d="M524.2 750.55 L532.2 747.05" stroke="#d8d8d8" stroke-width="0.9"/><path d="M524.2 759.9 L532.2 756.4" stroke="#d8d8d8" stroke-width="0.9"/><path d="M524.2 769.25 L532.2 765.75" stroke="#d8d8d8" stroke-width="0.9"/><path d="M524.2 778.6 L532.2 775.1" stroke="#d8d8d8" stroke-width="0.9"/>
<path d="M645.8 686.4 V780.6 A46.1 10.8 0 0 0 738 780.6 V686.4 Z" fill="#465c70"/><ellipse cx="691.9" cy="780.6" rx="41.1" ry="9.8" fill="#000"/><ellipse cx="691.9" cy="686.4" rx="45.4" ry="10.5" fill="#62788f"/><path d="M646.3 686.7 A45.6 10.9 0 0 0 737.5 686.7" fill="none" stroke="#fff" stroke-width="1.3"/><path d="M727 703.8 L735 700.3" stroke="#d8d8d8" stroke-width="0.9"/><path d="M727 713.15 L735 709.65" stroke="#d8d8d8" stroke-width="0.9"/><path d="M727 722.5 L735 719" stroke="#d8d8d8" stroke-width="0.9"/><path d="M727 731.85 L735 728.35" stroke="#d8d8d8" stroke-width="0.9"/><path d="M727 741.2 L735 737.7" stroke="#d8d8d8" stroke-width="0.9"/><path d="M727 750.55 L735 747.05" stroke="#d8d8d8" stroke-width="0.9"/><path d="M727 759.9 L735 756.4" stroke="#d8d8d8" stroke-width="0.9"/><path d="M727 769.25 L735 765.75" stroke="#d8d8d8" stroke-width="0.9"/><path d="M727 778.6 L735 775.1" stroke="#d8d8d8" stroke-width="0.9"/>
<path d="M398.56 785.30 A54.8 54.8 0 0 1 398.56 682.30" fill="none" stroke="#888" stroke-width="2.6"/><path d="M398.97 784.17 L400.27 780.60" stroke="#222" stroke-width="0.8"/><path d="M387.33 778.24 L389.45 775.09" stroke="#222" stroke-width="0.8"/><path d="M377.47 769.67 L380.29 767.12" stroke="#222" stroke-width="0.8"/><path d="M369.97 758.96 L373.33 757.18" stroke="#222" stroke-width="0.8"/><path d="M365.29 746.77 L368.98 745.85" stroke="#222" stroke-width="0.8"/><path d="M361.30 733.80 L367.70 733.80" stroke="#888" stroke-width="2"/><path d="M365.29 720.83 L368.98 721.75" stroke="#222" stroke-width="0.8"/><path d="M369.97 708.64 L373.33 710.42" stroke="#222" stroke-width="0.8"/><path d="M377.47 697.93 L380.29 700.48" stroke="#222" stroke-width="0.8"/><path d="M387.33 689.36 L389.45 692.51" stroke="#222" stroke-width="0.8"/><path d="M398.97 683.43 L400.27 687.00" stroke="#222" stroke-width="0.8"/><path d="M391.20 708.00 L420.11 730.96 A4 4 0 1 1 414.49 736.64 Z" fill="#1a1a1a"/>
<path d="M601.66 785.30 A54.8 54.8 0 0 1 601.66 682.30" fill="none" stroke="#888" stroke-width="2.6"/><path d="M602.07 784.17 L603.37 780.60" stroke="#222" stroke-width="0.8"/><path d="M590.43 778.24 L592.55 775.09" stroke="#222" stroke-width="0.8"/><path d="M580.57 769.67 L583.39 767.12" stroke="#222" stroke-width="0.8"/><path d="M573.07 758.96 L576.43 757.18" stroke="#222" stroke-width="0.8"/><path d="M568.39 746.77 L572.08 745.85" stroke="#222" stroke-width="0.8"/><path d="M564.40 733.80 L570.80 733.80" stroke="#888" stroke-width="2"/><path d="M568.39 720.83 L572.08 721.75" stroke="#222" stroke-width="0.8"/><path d="M573.07 708.64 L576.43 710.42" stroke="#222" stroke-width="0.8"/><path d="M580.57 697.93 L583.39 700.48" stroke="#222" stroke-width="0.8"/><path d="M590.43 689.36 L592.55 692.51" stroke="#222" stroke-width="0.8"/><path d="M602.07 683.43 L603.37 687.00" stroke="#222" stroke-width="0.8"/><path d="M591.70 710.60 L622.91 730.69 A4 4 0 1 1 617.89 736.91 Z" fill="#1a1a1a"/>
<path d="M805.66 785.40 A54.8 54.8 0 0 1 805.66 682.40" fill="none" stroke="#888" stroke-width="2.6"/><path d="M806.07 784.27 L807.37 780.70" stroke="#222" stroke-width="0.8"/><path d="M794.43 778.34 L796.55 775.19" stroke="#222" stroke-width="0.8"/><path d="M784.57 769.77 L787.39 767.22" stroke="#222" stroke-width="0.8"/><path d="M777.07 759.06 L780.43 757.28" stroke="#222" stroke-width="0.8"/><path d="M772.39 746.87 L776.08 745.95" stroke="#222" stroke-width="0.8"/><path d="M768.40 733.90 L774.80 733.90" stroke="#888" stroke-width="2"/><path d="M772.39 720.93 L776.08 721.85" stroke="#222" stroke-width="0.8"/><path d="M777.07 708.74 L780.43 710.52" stroke="#222" stroke-width="0.8"/><path d="M784.57 698.03 L787.39 700.58" stroke="#222" stroke-width="0.8"/><path d="M794.43 689.46 L796.55 692.61" stroke="#222" stroke-width="0.8"/><path d="M806.07 683.53 L807.37 687.10" stroke="#222" stroke-width="0.8"/><path d="M810.40 768.50 L820.69 732.40 A4 4 0 1 1 828.11 735.40 Z" fill="#1a1a1a"/>
</svg>
<span class="t" style="left:393.60px;top:685.00px;font-size:11px;color:#222;letter-spacing:-0.275px;">1,000</span>
<span class="t" style="left:388.00px;top:691.00px;font-size:11px;color:#222;letter-spacing:-0.750px;">900</span>
<span class="t" style="left:380.70px;top:698.00px;font-size:11px;color:#222;letter-spacing:-0.350px;">800</span>
<span class="t" style="left:374.60px;top:707.00px;font-size:11px;color:#222;letter-spacing:-0.300px;">700</span>
<span class="t" style="left:370.70px;top:719.00px;font-size:11px;color:#222;letter-spacing:0.050px;">600</span>
<span class="t" style="left:370.00px;top:730.00px;font-size:11px;color:#222;letter-spacing:-0.100px;">500</span>
<span class="t" style="left:371.70px;top:741.00px;font-size:11px;color:#222;letter-spacing:-0.450px;">400</span>
<span class="t" style="left:374.60px;top:752.00px;font-size:11px;color:#222;letter-spacing:-0.300px;">300</span>
<span class="t" style="left:381.20px;top:762.00px;font-size:11px;color:#222;letter-spacing:-0.600px;">200</span>
<span class="t" style="left:387.70px;top:769.00px;font-size:11px;color:#222;letter-spacing:-0.750px;">100</span>
<span class="t" style="left:400.40px;top:775.00px;font-size:11px;color:#222;">0</span>
<span class="t" style="left:601.20px;top:685.00px;font-size:11px;color:#222;letter-spacing:-1.500px;">100</span>
<span class="t" style="left:592.00px;top:691.00px;font-size:11px;color:#222;letter-spacing:-1.000px;">90</span>
<span class="t" style="left:584.30px;top:698.00px;font-size:11px;color:#222;letter-spacing:-0.600px;">80</span>
<span class="t" style="left:577.60px;top:708.00px;font-size:11px;color:#222;letter-spacing:0.400px;">70</span>
<span class="t" style="left:574.00px;top:719.00px;font-size:11px;color:#222;letter-spacing:0.400px;">60</span>
<span class="t" style="left:573.10px;top:730.00px;font-size:11px;color:#222;letter-spacing:0.400px;">50</span>
<span class="t" style="left:575.00px;top:741.00px;font-size:11px;color:#222;letter-spacing:-0.600px;">40</span>
<span class="t" style="left:577.60px;top:752.00px;font-size:11px;color:#222;letter-spacing:0.400px;">30</span>
<span class="t" style="left:584.30px;top:762.00px;font-size:11px;color:#222;letter-spacing:-0.600px;">20</span>
<span class="t" style="left:591.70px;top:769.00px;font-size:11px;color:#222;letter-spacing:-0.500px;">10</span>
<span class="t" style="left:602.90px;top:775.00px;font-size:11px;color:#222;">0</span>
<span class="t" style="left:802.90px;top:685.00px;font-size:11px;color:#222;letter-spacing:-0.450px;">500</span>
<span class="t" style="left:794.70px;top:691.00px;font-size:11px;color:#222;letter-spacing:-0.550px;">450</span>
<span class="t" style="left:787.60px;top:698.00px;font-size:11px;color:#222;letter-spacing:-0.500px;">400</span>
<span class="t" style="left:781.50px;top:708.00px;font-size:11px;color:#222;letter-spacing:-0.150px;">350</span>
<span class="t" style="left:777.70px;top:718.00px;font-size:11px;color:#222;letter-spacing:-0.050px;">300</span>
<span class="t" style="left:778.00px;top:730.00px;font-size:11px;color:#222;letter-spacing:-0.600px;">250</span>
<span class="t" style="left:778.70px;top:741.00px;font-size:11px;color:#222;letter-spacing:-0.550px;">200</span>
<span class="t" style="left:781.50px;top:752.00px;font-size:11px;color:#222;letter-spacing:-0.150px;">150</span>
<span class="t" style="left:787.60px;top:762.00px;font-size:11px;color:#222;letter-spacing:-0.300px;">100</span>
<span class="t" style="left:794.80px;top:769.00px;font-size:11px;color:#222;letter-spacing:0.200px;">50</span>
<span class="t" style="left:807.40px;top:775.00px;font-size:11px;color:#222;">0</span>
<div class="d" style="left:238px;top:674px;width:94px;height:119px;background-position:0px 0,0px 100%,0 0px,100% 0px,0 0,100% 0,0 100%,100% 100%;"></div>
<div class="d" style="left:442px;top:674px;width:94px;height:119px;background-position:0px 0,0px 100%,0 0px,100% 0px,0 0,100% 0,0 100%,100% 100%;"></div>
<div class="d" style="left:645px;top:674px;width:94px;height:119px;background-position:0px 0,0px 100%,0 0px,100% 0px,0 0,100% 0,0 100%,100% 100%;"></div>
<div class="b" style="left:739px;top:675px;width:91px;height:117px;border:2px solid #5b8dee;"></div>
<div class="d" style="left:228px;top:811px;width:613px;height:27px;"></div>
<span class="t" style="left:228.80px;top:816.00px;font-size:16px;color:#333;letter-spacing:-0.239px;">Storage Tank Levels</span>
<div class="d" style="left:228px;top:181px;width:613px;height:667px;border-top:none;"></div>
<div class="d" style="left:859px;top:181px;width:202px;height:52px;"></div>
<div class="d" style="left:859px;top:241px;width:202px;height:607px;"></div>
<div class="b" style="left:862px;top:242px;width:196px;height:34px;border:1px solid #ccc;border-radius:4px;background:#fff;box-shadow:inset 0 1px 1px rgba(0,0,0,0.06);"></div>
<span class="t" style="left:874.50px;top:253.00px;font-size:14.5px;color:#999;letter-spacing:-0.476px;">Search entities...</span>
<span class="t" style="left:861.30px;top:294.00px;font-size:10px;color:#333;letter-spacing:-0.722px;">FILTER BY HIERARCHY</span>
<span class="t" style="left:862.30px;top:316.00px;font-size:11px;color:#333;letter-spacing:-0.260px;">Oil and Gas</span>
<svg style="left:920px;top:316px" width="14" height="10" viewBox="920 316 14 10"><polygon points="922.8,320 930.9,320 926.85,324.2" fill="#111"/></svg>
<div class="b" style="left:862px;top:333px;width:69px;height:3px;background:#6a6a6a;"></div>
<div class="b" style="left:939px;top:308px;width:119px;height:30px;border:1px solid #ccc;border-radius:4px;background:#fff;box-shadow:inset 0 1px 1px rgba(0,0,0,0.06);"></div>
<span class="t" style="left:949.40px;top:317.00px;font-size:13px;color:#999;letter-spacing:-0.417px;">Find under...</span>
<div class="b" style="left:1089px;top:163px;width:355px;height:703px;background:#f8f8f8;"></div>
<span class="t" style="left:1108.50px;top:184.00px;font-size:20.5px;color:#2a2a2a;letter-spacing:0.250px;-webkit-text-stroke:0.25px #f8f8f8;">Meter</span>
<svg style="left:1401.1px;top:183px" width="18" height="18" viewBox="0 0 18 18"><circle cx="9" cy="9" r="8.6" fill="#1e73b7"/>
<path d="M6 6.9 C6 3.9 11.9 3.9 11.9 6.9 C11.9 8.8 9 8.7 9 10.8" fill="none" stroke="#fff" stroke-width="2.2"/><rect x="7.9" y="12" width="2.3" height="2.3" fill="#fff"/></svg>
<span class="t" style="left:1109.00px;top:220.00px;font-size:12px;color:#333;letter-spacing:-0.518px;">The Meter shows a numeric value as a needle in relation to</span>
<span class="t" style="left:1109.00px;top:235.00px;font-size:12px;color:#333;letter-spacing:-0.508px;">target areas.</span>
<span class="t" style="left:1109.00px;top:273.00px;font-size:12px;color:#333;letter-spacing:-0.550px;">Value</span>
<div class="dd" style="left:1212px;top:267px;width:207px;height:26px;"></div>
<span class="t" style="left:1240.60px;top:274.00px;font-size:12px;color:#777;letter-spacing:-0.503px;">WellProductionData.WaterStor...</span>
<span class="t" style="left:1108.00px;top:311.00px;font-size:12px;color:#333;letter-spacing:-0.550px;">Measure 1</span>
<div class="dd" style="left:1212px;top:305px;width:207px;height:26px;"></div>
<span class="t" style="left:1240.60px;top:312.00px;font-size:12px;color:#777;letter-spacing:-0.503px;">WellProductionData.WaterStor...</span>
<span class="t" style="left:1108.00px;top:349.00px;font-size:12px;color:#333;letter-spacing:-0.475px;">Measure 2</span>
<div class="dd" style="left:1212px;top:343px;width:207px;height:26px;"></div>
<span class="t" style="left:1220.00px;top:350.00px;font-size:12px;color:#999;letter-spacing:-0.400px;">Click to configure data...</span>
<span class="t" style="left:1108.00px;top:387.00px;font-size:12px;color:#333;letter-spacing:-0.475px;">Measure 3</span>
<div class="dd" style="left:1212px;top:381px;width:207px;height:26px;"></div>
<span class="t" style="left:1220.00px;top:388.00px;font-size:12px;color:#999;letter-spacing:-0.400px;">Click to configure data...</span>
<span class="t" style="left:1108.00px;top:425.00px;font-size:12px;color:#333;letter-spacing:-0.475px;">Measure 4</span>
<div class="dd" style="left:1212px;top:419px;width:207px;height:26px;"></div>
<span class="t" style="left:1220.00px;top:426.00px;font-size:12px;color:#999;letter-spacing:-0.400px;">Click to configure data...</span>
<span class="t" style="left:1108.00px;top:463.00px;font-size:12px;color:#333;letter-spacing:-0.475px;">Measure 5</span>
<div class="dd" style="left:1212px;top:457px;width:207px;height:26px;"></div>
<span class="t" style="left:1220.00px;top:464.00px;font-size:12px;color:#999;letter-spacing:-0.400px;">Click to configure data...</span>
<span class="t" style="left:1108.00px;top:501.00px;font-size:12px;color:#333;letter-spacing:-0.250px;">Minimum Value</span>
<div class="dd" style="left:1212px;top:495px;width:207px;height:26px;"></div>
<span class="t" style="left:1220.00px;top:502.00px;font-size:12px;color:#999;letter-spacing:-0.400px;">Click to configure data...</span>
<span class="t" style="left:1108.00px;top:539.00px;font-size:12px;color:#333;letter-spacing:-0.386px;">Number of Ticks</span>
<div class="dd" style="left:1212px;top:533px;width:207px;height:26px;"></div>
<span class="t" style="left:1239.00px;top:540.00px;font-size:12px;color:#777;letter-spacing:-0.200px;">10</span>
<span class="t" style="left:1108.00px;top:629.00px;font-size:12px;color:#333;letter-spacing:-0.263px;">Minimum Arc Angle</span>
<div class="dd" style="left:1212px;top:623px;width:207px;height:26px;"></div>
<span class="t" style="left:1240.00px;top:630.00px;font-size:12px;color:#777;letter-spacing:-0.733px;">-160</span>
<span class="t" style="left:1108.00px;top:667.00px;font-size:12px;color:#333;letter-spacing:-0.356px;">Maximum Arc Angle</span>
<div class="dd" style="left:1212px;top:661px;width:207px;height:26px;"></div>
<span class="t" style="left:1240.00px;top:668.00px;font-size:12px;color:#777;letter-spacing:-0.800px;">-20</span>
<span class="t" style="left:1138.70px;top:273.00px;font-size:14px;color:#f26a6a;">*</span>
<div class="dd" style="left:1109px;top:578px;width:45.4px;height:26px;box-shadow:none;"></div>
<div class="dd" style="left:1199px;top:578px;width:45.4px;height:26px;box-shadow:none;"></div>
<div class="dd" style="left:1288px;top:578px;width:45.4px;height:26px;box-shadow:none;"></div>
<div class="dd" style="left:1378px;top:578px;width:45.4px;height:26px;box-shadow:none;"></div>
<span class="t" style="left:1108.00px;top:706.00px;font-size:12px;color:#333;letter-spacing:-0.450px;">Style</span>
<div class="dd" style="left:1299px;top:699px;width:120px;height:26px;"></div>
<span class="t" style="left:1307.30px;top:706.00px;font-size:12px;color:#777;letter-spacing:-0.280px;">Normal</span>
<svg style="left:1090px;top:162px" width="354" height="704" viewBox="1090 162 354 704"><rect x="1221.4" y="276.4" width="10.2" height="7.4" rx="0.8" fill="none" stroke="#666" stroke-width="0.9"/><path d="M1221.4 279.3 H1231.6 M1221.4 281.5 H1231.6 M1224.6 277 V283.8 M1228 277 V283.8" stroke="#666" stroke-width="0.8" fill="none"/><rect x="1221.4" y="276.4" width="10.2" height="1.6" fill="#666"/><polygon points="1405.8,276.6 1412.4,276.6 1409.1,282.8" fill="#111"/><rect x="1221.4" y="314.4" width="10.2" height="7.4" rx="0.8" fill="none" stroke="#666" stroke-width="0.9"/><path d="M1221.4 317.3 H1231.6 M1221.4 319.5 H1231.6 M1224.6 315 V321.8 M1228 315 V321.8" stroke="#666" stroke-width="0.8" fill="none"/><rect x="1221.4" y="314.4" width="10.2" height="1.6" fill="#666"/><polygon points="1405.8,314.6 1412.4,314.6 1409.1,320.8" fill="#111"/><polygon points="1405.8,352.6 1412.4,352.6 1409.1,358.8" fill="#111"/><polygon points="1405.8,390.6 1412.4,390.6 1409.1,396.8" fill="#111"/><polygon points="1405.8,428.6 1412.4,428.6 1409.1,434.8" fill="#111"/><polygon points="1405.8,466.6 1412.4,466.6 1409.1,472.8" fill="#111"/><polygon points="1405.8,504.6 1412.4,504.6 1409.1,510.8" fill="#111"/><circle cx="1226" cy="545.7" r="3.9" fill="none" stroke="#555" stroke-width="1.1"/><circle cx="1226" cy="545.7" r="1.5" fill="#555"/><polygon points="1405.8,542.6 1412.4,542.6 1409.1,548.8" fill="#111"/><circle cx="1226" cy="635.7" r="3.9" fill="none" stroke="#555" stroke-width="1.1"/><circle cx="1226" cy="635.7" r="1.5" fill="#555"/><polygon points="1405.8,632.6 1412.4,632.6 1409.1,638.8" fill="#111"/><circle cx="1226" cy="673.7" r="3.9" fill="none" stroke="#555" stroke-width="1.1"/><circle cx="1226" cy="673.7" r="1.5" fill="#555"/><polygon points="1405.8,670.6 1412.4,670.6 1409.1,676.8" fill="#111"/><path d="M1124 591.8 A8.2 8.2 0 0 1 1140 591.8" fill="none" stroke="#333" stroke-width="2.1"/><path d="M1216.8 596.6 A7.6 7.6 0 1 1 1226.8 596.6" fill="none" stroke="#333" stroke-width="2.1"/><path d="M1311.6 584 A9 9 0 0 0 1311.6 597.6" fill="none" stroke="#333" stroke-width="2.1"/><path d="M1400.2 584 A9 9 0 0 1 1400.2 597.6" fill="none" stroke="#333" stroke-width="2.1"/><polygon points="1405.8,708.6 1412.4,708.6 1409.1,714.8" fill="#666"/></svg>
</div>
</body></html>
